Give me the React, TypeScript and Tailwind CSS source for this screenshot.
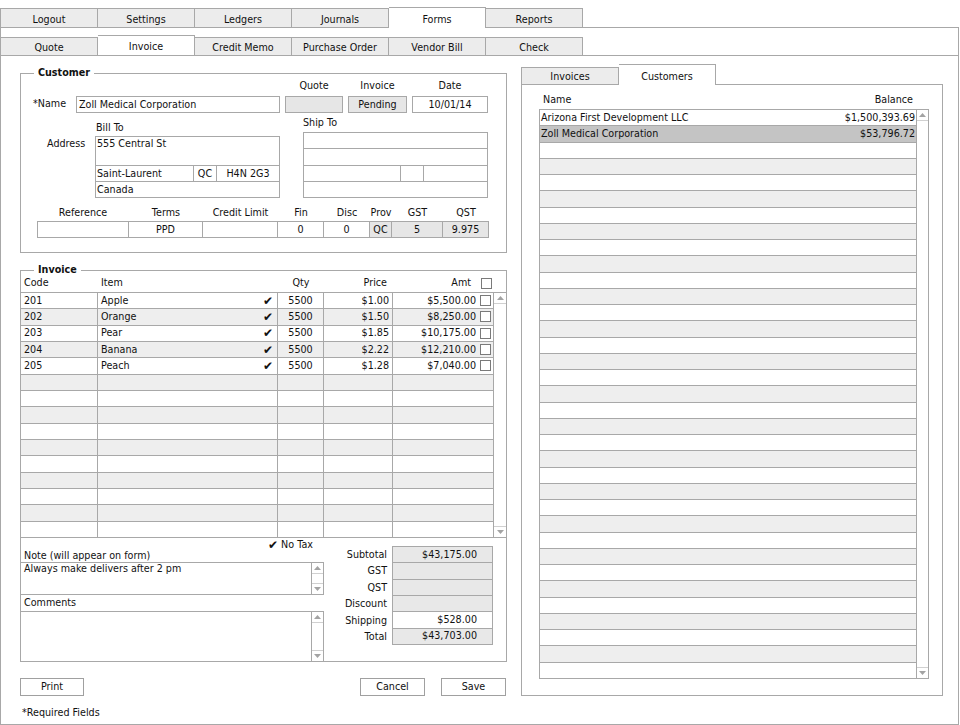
import React from 'react'

const topTabs = ['Logout', 'Settings', 'Ledgers', 'Journals', 'Forms', 'Reports']
const formTabs = ['Quote', 'Invoice', 'Credit Memo', 'Purchase Order', 'Vendor Bill', 'Check']

const items = [
  { code: '201', name: 'Apple', qty: '5500', price: '$1.00', amt: '$5,500.00' },
  { code: '202', name: 'Orange', qty: '5500', price: '$1.50', amt: '$8,250.00' },
  { code: '203', name: 'Pear', qty: '5500', price: '$1.85', amt: '$10,175.00' },
  { code: '204', name: 'Banana', qty: '5500', price: '$2.22', amt: '$12,210.00' },
  { code: '205', name: 'Peach', qty: '5500', price: '$1.28', amt: '$7,040.00' },
]

const customers = [
  { name: 'Arizona First Development LLC', balance: '$1,500,393.69' },
  { name: 'Zoll Medical Corporation', balance: '$53,796.72' },
]

const totals = [
  { label: 'Subtotal', value: '$43,175.00', gray: true },
  { label: 'GST', value: '', gray: true },
  { label: 'QST', value: '', gray: true },
  { label: 'Discount', value: '', gray: true },
  { label: 'Shipping', value: '$528.00', gray: false },
  { label: 'Total', value: '$43,703.00', gray: true },
]

const refCols = [
  { label: 'Reference', value: '', w: 'w-[92px]', gray: false },
  { label: 'Terms', value: 'PPD', w: 'w-[74px]', gray: false },
  { label: 'Credit Limit', value: '', w: 'w-[75px]', gray: false },
  { label: 'Fin', value: '0', w: 'w-[46px]', gray: false },
  { label: 'Disc', value: '0', w: 'w-[46px]', gray: false },
  { label: 'Prov', value: 'QC', w: 'w-[22px]', gray: true },
  { label: 'GST', value: '5', w: 'w-[51px]', gray: true },
  { label: 'QST', value: '9.975', w: 'w-[46px]', gray: true },
]

function Up() {
  return (
    <svg width="7" height="4" viewBox="0 0 7 4">
      <path d="M0 4L3.5 0L7 4Z" fill="#a3a3a3" />
    </svg>
  )
}

function Down() {
  return (
    <svg width="7" height="4" viewBox="0 0 7 4">
      <path d="M0 0L3.5 4L7 0Z" fill="#a3a3a3" />
    </svg>
  )
}

function Scroll() {
  return (
    <div className="flex flex-col justify-between h-full">
      <div className="h-[11px] flex items-center justify-center border-b border-[#d0d0d0]">
        <Up />
      </div>
      <div className="h-[11px] flex items-center justify-center border-t border-[#d0d0d0]">
        <Down />
      </div>
    </div>
  )
}

function Box() {
  return <span className="block w-[11px] h-[11px] border border-[#7a7a7a] bg-white" />
}

function Tick() {
  return <span className="text-[12px] leading-none font-bold">✔</span>
}

function CustomerBox() {
  return (
    <div className="relative mt-[17px] h-[180px] border border-[#a8a8a8]">
      <span className="absolute left-[13px] top-[-7px] bg-white px-[4px] font-bold">Customer</span>

      <div className="flex mt-[6px] h-[12px]">
        <div className="ml-[264px] w-[58px] text-center">Quote</div>
        <div className="ml-[5px] w-[59px] text-center">Invoice</div>
        <div className="ml-[5px] w-[76px] text-center">Date</div>
      </div>

      <div className="flex mt-[4px] h-[17px]">
        <div className="ml-[12px] w-[43px] leading-[15px]">*Name</div>
        <div className="w-[204px] border border-[#a8a8a8] pl-[2px] leading-[15px]">Zoll Medical Corporation</div>
        <div className="ml-[5px] w-[58px] border border-[#a8a8a8] bg-[#e6e6e6]" />
        <div className="ml-[5px] w-[59px] border border-[#a8a8a8] bg-[#e6e6e6] text-center leading-[15px]">Pending</div>
        <div className="ml-[5px] w-[76px] border border-[#a8a8a8] text-center leading-[15px]">10/01/14</div>
      </div>

      <div className="flex mt-[4px]">
        <div className="w-[74px] pl-[26px] pt-[21px]">Address</div>
        <div className="w-[185px]">
          <div className="h-[19px] pl-[1px] pt-[5px]">Bill To</div>
          <div className="h-[62px] flex flex-col border border-[#a8a8a8]">
            <div className="h-[29px] border-b border-[#a8a8a8] pl-[1px] pt-[1px]">555 Central St</div>
            <div className="h-[16px] flex border-b border-[#a8a8a8] leading-[15px]">
              <div className="w-[98px] border-r border-[#a8a8a8] pl-[1px]">Saint-Laurent</div>
              <div className="w-[23px] border-r border-[#a8a8a8] text-center">QC</div>
              <div className="flex-1 text-center">H4N 2G3</div>
            </div>
            <div className="flex-1 pl-[1px] leading-[15px]">Canada</div>
          </div>
        </div>
        <div className="ml-[23px] w-[185px]">
          <div className="h-[14px]">Ship To</div>
          <div className="mt-[1px] h-[66px] flex flex-col border border-[#a8a8a8]">
            <div className="h-[16px] border-b border-[#a8a8a8]" />
            <div className="h-[17px] border-b border-[#a8a8a8]" />
            <div className="h-[16px] flex border-b border-[#a8a8a8]">
              <div className="w-[97px] border-r border-[#a8a8a8]" />
              <div className="w-[23px] border-r border-[#a8a8a8]" />
            </div>
            <div className="flex-1" />
          </div>
        </div>
      </div>

      <div className="ml-[16px] mt-[9px] flex h-[12px]">
        {refCols.map((c) => (
          <div key={c.label} className={`${c.w} text-center whitespace-nowrap`}>
            {c.label}
          </div>
        ))}
      </div>
      <div className="ml-[16px] mt-[2px] h-[17px] w-[452px] flex border-l border-t border-b border-[#a8a8a8] leading-[15px]">
        {refCols.map((c, i) => (
          <div
            key={c.label}
            className={`${i === 0 ? 'w-[91px]' : c.w} border-r border-[#a8a8a8] text-center ${c.gray ? 'bg-[#e6e6e6]' : ''}`}
          >
            {c.value}
          </div>
        ))}
      </div>
    </div>
  )
}

function InvoiceBox() {
  const rows = Array.from({ length: 15 }, (_, i) => items[i])
  return (
    <div className="relative mt-[17px] h-[392px] border border-[#a8a8a8] flex flex-col">
      <span className="absolute left-[13px] top-[-7px] bg-white px-[4px] font-bold">Invoice</span>

      <div className="flex h-[21px] pt-[6px]">
        <div className="w-[77px] pl-[3px]">Code</div>
        <div className="w-[180px] pl-[3px]">Item</div>
        <div className="w-[46px] text-center">Qty</div>
        <div className="w-[69px] text-right pr-[6px]">Price</div>
        <div className="w-[100px] flex justify-end items-start">
          <span>Amt</span>
          <span className="ml-[10px] mr-[1px] mt-[1px]">
            <Box />
          </span>
        </div>
      </div>

      <div className="flex h-[246px] border-t border-b border-[#a8a8a8]">
        <div className="w-[472px] flex flex-col">
          {rows.map((r, i) => (
            <div
              key={i}
              className={`flex-1 flex ${i < 14 ? 'border-b border-[#a8a8a8]' : ''} ${i % 2 ? 'bg-[#eeeeee]' : 'bg-white'}`}
            >
              <div className="w-[77px] border-r border-[#a8a8a8] pl-[3px] flex items-center">{r?.code}</div>
              <div className="w-[180px] border-r border-[#a8a8a8] pl-[3px] pr-[4px] flex items-center justify-between">
                <span>{r?.name}</span>
                {r && <Tick />}
              </div>
              <div className="w-[46px] border-r border-[#a8a8a8] flex items-center justify-center">{r?.qty}</div>
              <div className="w-[69px] border-r border-[#a8a8a8] pr-[3px] flex items-center justify-end">{r?.price}</div>
              <div className="flex-1 flex items-center justify-end">
                {r && (
                  <>
                    <span>{r.amt}</span>
                    <span className="ml-[4px] mr-[2px]">
                      <Box />
                    </span>
                  </>
                )}
              </div>
            </div>
          ))}
        </div>
        <div className="flex-1 border-l border-[#a8a8a8]">
          <Scroll />
        </div>
      </div>

      <div className="flex flex-1">
        <div className="w-[303px] flex flex-col">
          <div className="h-[24px] flex">
            <span className="self-end pl-[3px]">Note (will appear on form)</span>
            <span className="ml-auto mr-[11px] mt-[1px] self-start flex items-center gap-[3px]">
              <Tick />
              <span>No Tax</span>
            </span>
          </div>
          <div className="h-[33px] flex border-t border-b border-r border-[#a8a8a8]">
            <div className="flex-1 pl-[3px]">Always make delivers after 2 pm</div>
            <div className="w-[12px] border-l border-[#a8a8a8]">
              <Scroll />
            </div>
          </div>
          <div className="h-[16px] leading-[16px] pl-[3px]">Comments</div>
          <div className="flex-1 flex border-t border-r border-[#a8a8a8]">
            <div className="flex-1" />
            <div className="w-[12px] border-l border-[#a8a8a8]">
              <Scroll />
            </div>
          </div>
        </div>

        <div className="flex mt-[8px] h-[99px]">
          <div className="w-[63px] flex flex-col">
            {totals.map((t) => (
              <div key={t.label} className="flex-1 flex items-center justify-end pt-[1px]">
                {t.label}
              </div>
            ))}
          </div>
          <div className="ml-[5px] w-[101px] flex flex-col border border-[#a8a8a8]">
            {totals.map((t, i) => (
              <div
                key={t.label}
                className={`flex-1 flex items-center justify-end pr-[15px] ${i < 5 ? 'border-b border-[#a8a8a8]' : ''} ${t.gray ? 'bg-[#e8e8e8]' : 'bg-white'}`}
              >
                {t.value}
              </div>
            ))}
          </div>
        </div>
      </div>
    </div>
  )
}

function CustomersPanel() {
  const count = 35
  const rows = Array.from({ length: count }, (_, i) => customers[i])
  return (
    <div className="ml-[14px] w-[422px]">
      <div className="flex items-end h-[28px]">
        <div className="w-[98px] h-[17px] pt-[2px] border-l border-t border-r border-[#a8a8a8] bg-[#ececec] flex items-center justify-center">
          Invoices
        </div>
        <div className="relative z-10 -mb-px w-[97px] h-[21px] pt-[3px] border-t border-r border-[#a8a8a8] bg-white flex items-center justify-center">
          Customers
        </div>
      </div>
      <div className="h-[612px] border border-[#a8a8a8]">
        <div className="flex justify-between pl-[21px] pr-[29px] pt-[9px] h-[20px]">
          <span>Name</span>
          <span>Balance</span>
        </div>
        <div className="ml-[17px] mt-[4px] w-[390px] h-[570px] flex border border-[#a8a8a8]">
          <div className="w-[376px] flex flex-col">
            {rows.map((c, i) => (
              <div
                key={i}
                className={`flex-1 flex items-center justify-between px-[1px] ${i < count - 1 ? 'border-b border-[#a8a8a8]' : ''} ${
                  i === 1 ? 'bg-[#c4c4c4]' : i % 2 ? 'bg-[#eeeeee]' : 'bg-white'
                }`}
              >
                <span>{c?.name}</span>
                <span>{c?.balance}</span>
              </div>
            ))}
          </div>
          <div className="flex-1 border-l border-[#a8a8a8]">
            <Scroll />
          </div>
        </div>
      </div>
    </div>
  )
}

export default function App() {
  return (
    <div className="w-[960px] h-[725px] bg-white overflow-hidden font-['DejaVu_Sans',sans-serif] text-[9.6px] leading-[12px] text-[#111]">
      <div className="flex items-end h-[27px]">
        {topTabs.map((t, i) => (
          <div
            key={t}
            className={`flex items-center justify-center pt-[3px] border-t border-r border-[#a8a8a8] ${i === 0 ? 'w-[98px] border-l' : 'w-[97px]'} ${
              t === 'Forms' ? 'relative z-10 -mb-px h-[21px] bg-white' : 'h-[19px] bg-[#ececec]'
            }`}
          >
            {t}
          </div>
        ))}
      </div>

      <div className="w-[959px] h-[698px] border border-[#a8a8a8]">
        <div className="flex items-end h-[28px] border-b border-[#a8a8a8]">
          {formTabs.map((t) => (
            <div
              key={t}
              className={`w-[97px] flex items-center justify-center pt-[3px] border-t border-r border-[#a8a8a8] ${
                t === 'Invoice' ? 'h-[20px] bg-white' : 'h-[18px] bg-[#ececec]'
              }`}
            >
              {t}
            </div>
          ))}
        </div>

        <div className="flex pl-[19px]">
          <div className="w-[487px]">
            <CustomerBox />
            <InvoiceBox />
            <div className="flex mt-[16px]">
              <button className="w-[64px] h-[18px] border border-[#a0a0a0] bg-white">Print</button>
              <button className="ml-auto w-[65px] h-[18px] border border-[#a0a0a0] bg-white">Cancel</button>
              <button className="ml-[16px] mr-[1px] w-[65px] h-[18px] border border-[#a0a0a0] bg-white">Save</button>
            </div>
            <div className="mt-[11px] pl-[2px]">*Required Fields</div>
          </div>
          <CustomersPanel />
        </div>
      </div>
    </div>
  )
}
